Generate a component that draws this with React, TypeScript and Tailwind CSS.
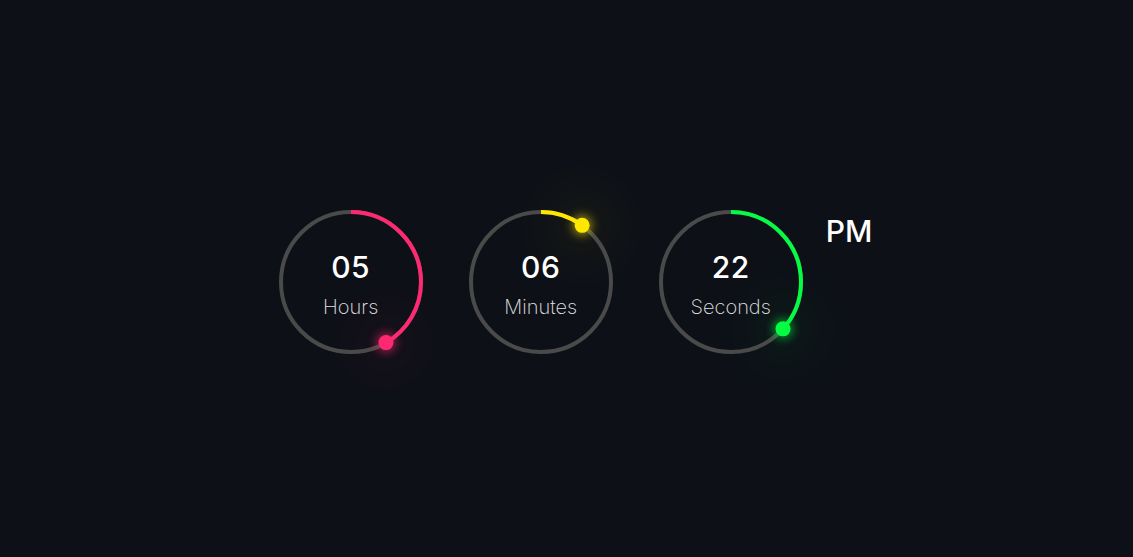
const units = [
  { value: "05", label: "Hours", color: "#ff2972", frac: 5 / 12 },
  { value: "06", label: "Minutes", color: "#fee800", frac: 6 / 60 },
  { value: "22", label: "Seconds", color: "#04fc43", frac: 22 / 60 },
];

const R = 70;
const C = 2 * Math.PI * R;

const Ring = ({ value, label, color, frac }: (typeof units)[number]) => {
  const a = frac * 2 * Math.PI;
  const dx = 75 + R * Math.sin(a);
  const dy = 75 - R * Math.cos(a);
  return (
    <div className="relative w-[150px] h-[150px] flex flex-col items-center">
      <svg width="150" height="150" className="absolute inset-0 overflow-visible">
        <defs>
          <filter id={"glow-" + label} x="-300%" y="-300%" width="700%" height="700%">
            <feGaussianBlur stdDeviation="5" />
          </filter>
          <filter id={"halo-" + label} x="-300%" y="-300%" width="700%" height="700%">
            <feGaussianBlur stdDeviation="18" />
          </filter>
        </defs>
        <circle cx={dx} cy={dy} r="45" fill={color} opacity="0.025" filter={"url(#halo-" + label + ")"} />
        <circle cx="75" cy="75" r={R} fill="none" stroke="#4a4a4a" strokeWidth="4" />
        <circle
          cx="75"
          cy="75"
          r={R}
          fill="none"
          stroke={color}
          strokeWidth="4"
          strokeDasharray={C}
          strokeDashoffset={C * (1 - frac)}
          transform="rotate(-90 75 75)"
        />
        <circle cx={dx} cy={dy} r="10" fill={color} opacity="0.55" filter={"url(#glow-" + label + ")"} />
        <circle cx={dx} cy={dy} r="7.5" fill={color} />
      </svg>
      <div className="relative mt-[45px] text-[30px] leading-none font-medium tracking-[0.5px] text-white">{value}</div>
      <div className="relative mt-[15px] text-[20px] leading-none font-extralight text-[#e2e2e2]">{label}</div>
    </div>
  );
};

export default function App() {
  return (
    <div
      className="min-h-[557px] w-full bg-[#0d1017] flex items-center justify-center pt-[7px] pl-[15px]"
      style={{ fontFamily: "Inter, 'Noto Sans', sans-serif" }}
    >
      <div className="flex items-start">
        <div className="flex gap-[40px]">
          {units.map((u) => (
            <Ring key={u.label} {...u} />
          ))}
        </div>
        <div className="ml-[20px] mt-[9px] text-[30px] leading-none font-medium text-white">PM</div>
      </div>
    </div>
  );
}
